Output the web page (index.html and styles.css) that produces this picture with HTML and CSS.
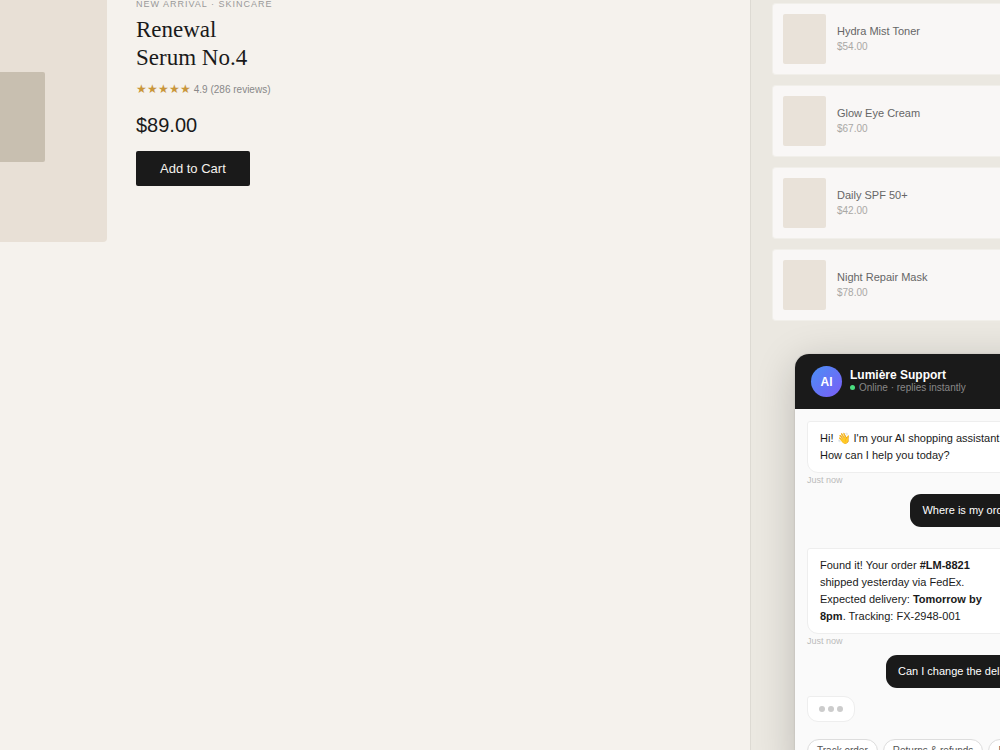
FILE: index.html
```html
<!DOCTYPE html>
<html lang="en">
<head>
<meta charset="utf-8">
<title>Lumière</title>
<link rel="stylesheet" href="styles.css">
</head>
<body>
<div class="shop">
  <main class="product">
    <div class="gallery"><div class="bottle"></div></div>
    <section class="details">
      <p class="eyebrow">NEW ARRIVAL · SKINCARE</p>
      <h1 class="name">Renewal<br>Serum No.4</h1>
      <p class="rating"><span class="stars">★★★★★</span> 4.9 (286 reviews)</p>
      <p class="price">$89.00</p>
      <button class="add" type="button">Add to Cart</button>
    </section>
  </main>
  <aside class="related">
    <article class="card"><div class="thumb"></div><div class="card-text"><h2 class="card-name">Hydra Mist Toner</h2><p class="card-price">$54.00</p></div></article>
    <article class="card"><div class="thumb"></div><div class="card-text"><h2 class="card-name">Glow Eye Cream</h2><p class="card-price">$67.00</p></div></article>
    <article class="card"><div class="thumb"></div><div class="card-text"><h2 class="card-name">Daily SPF 50+</h2><p class="card-price">$42.00</p></div></article>
    <article class="card"><div class="thumb"></div><div class="card-text"><h2 class="card-name">Night Repair Mask</h2><p class="card-price">$78.00</p></div></article>
  </aside>
</div>
<section class="chat" aria-label="Support chat">
  <header class="chat-head">
    <div class="avatar">AI</div>
    <div>
      <h2 class="agent">Lumière Support</h2>
      <p class="status"><span class="online"></span>Online · replies instantly</p>
    </div>
  </header>
  <div class="messages">
    <div class="turn">
      <p class="bubble bot">Hi! 👋 I'm your AI shopping assistant.<br>How can I help you today?</p>
      <time class="time">Just now</time>
    </div>
    <p class="bubble user">Where is my order #LM-8821?</p>
    <div class="turn reply">
      <p class="bubble bot">Found it! Your order <strong>#LM-8821</strong> shipped yesterday via FedEx. Expected delivery: <strong>Tomorrow by 8pm</strong>. Tracking: FX-2948-001</p>
      <time class="time">Just now</time>
    </div>
    <p class="bubble user">Can I change the delivery address?</p>
    <div class="bubble bot typing"><i class="dot"></i><i class="dot"></i><i class="dot"></i></div>
  </div>
  <div class="quick">
    <button class="chip" type="button">Track order</button>
    <button class="chip" type="button">Returns &amp; refunds</button>
    <button class="chip" type="button">Product help</button>
  </div>
</section>
</body>
</html>
```
FILE: styles.css
```css
* { box-sizing: border-box; }
body {
  margin: 0;
  position: relative;
  height: 100vh;
  overflow: hidden;
  font-family: "Liberation Sans", Arial, sans-serif;
  color: #1a1a1a;
  background: #f5f2ed;
}
h1, h2, p { margin: 0; font-weight: 400; }
button { font-family: inherit; }

.shop { display: grid; grid-template-columns: 3fr 1fr; min-height: 100vh; }

.product { display: flex; align-items: flex-start; gap: 29px; }
.gallery {
  display: flex;
  align-items: center;
  width: 107px;
  height: 242px;
  padding-bottom: 8px;
  background: #e8e0d6;
  border-radius: 0 0 4px 0;
}
.bottle { width: 45px; height: 90px; background: #c8bfb0; border-radius: 0 2px 2px 0; }
.eyebrow { margin-top: -2px; font-size: 9px; line-height: 12px; letter-spacing: 1px; color: #999; }
.name { margin-top: 6px; font: 23px/28px "Liberation Serif", serif; }
.rating { margin-top: 9px; font-size: 10px; line-height: 16px; color: #888; }
.stars { font-size: 12px; color: #c9963a; }
.price { margin-top: 15px; font-size: 20px; line-height: 24px; }
.add {
  margin-top: 14px;
  padding: 10px 24px;
  border: 0;
  border-radius: 2px;
  background: #1a1a1a;
  color: #f5f2ed;
  font-size: 13px;
  line-height: 15px;
}

.related {
  display: flex;
  flex-direction: column;
  gap: 10px;
  min-width: 0;
  padding: 3px 0 0 21px;
  border-left: 1px solid #dddad3;
  background: #ebe8e1;
}
.card {
  display: flex;
  align-items: center;
  gap: 11px;
  padding: 10px;
  border: 1px solid #f1efea;
  border-right: 0;
  border-radius: 4px 0 0 4px;
  background: #f9f7f6;
}
.thumb { width: 43px; height: 50px; border-radius: 2px; background: #e9e2d9; }
.card-text { padding-bottom: 2px; }
.card-name { font-size: 11px; line-height: 16px; color: #666; }
.card-price { font-size: 10px; line-height: 15px; color: #a9a8a5; }

.chat {
  position: absolute;
  top: 354px;
  right: -95px;
  width: 300px;
  border-radius: 14px;
  overflow: hidden;
  background: #fafafa;
  box-shadow: 0 8px 40px rgba(0, 0, 0, .2), 0 0 2px rgba(0, 0, 0, .15);
}
.chat-head { display: flex; align-items: center; gap: 8px; padding: 12px 16px; background: #1a1a1a; }
.avatar {
  display: grid;
  place-items: center;
  width: 31px;
  height: 31px;
  border-radius: 50%;
  background: linear-gradient(135deg, #4a90f5, #7b5cf6);
  color: #fff;
  font-size: 12px;
  font-weight: 700;
}
.agent { color: #fff; font-size: 12px; font-weight: 700; line-height: 12px; }
.status { display: flex; align-items: center; gap: 4px; font-size: 10px; line-height: 13px; color: #888; }
.online { width: 5px; height: 5px; border-radius: 50%; background: #4ade80; }
.messages { display: flex; flex-direction: column; gap: 8px; padding: 12px; }
.turn { display: flex; flex-direction: column; align-items: flex-start; }
.reply { margin-top: 13px; }
.bubble { max-width: 210px; padding: 8px 12px; border-radius: 11px; font-size: 11px; line-height: 17px; }
.bot { border: 1px solid #eee; border-top-left-radius: 3px; background: #fff; }
.user { align-self: flex-end; background: #1a1a1a; color: #fff; white-space: nowrap; }
.time { margin-top: 2px; font-size: 9px; line-height: 11px; color: #bbb; }
.typing { display: flex; gap: 3px; align-self: flex-start; padding: 9px 11px; }
.dot { width: 6px; height: 6px; border-radius: 50%; background: #ccc; }
.quick { display: flex; gap: 5px; padding: 5px 12px 12px; }
.chip {
  flex: none;
  padding: 4px 9px;
  border: 1px solid #ddd;
  border-radius: 14px;
  background: #fff;
  color: #555;
  font-size: 10px;
  line-height: 14px;
}
```
